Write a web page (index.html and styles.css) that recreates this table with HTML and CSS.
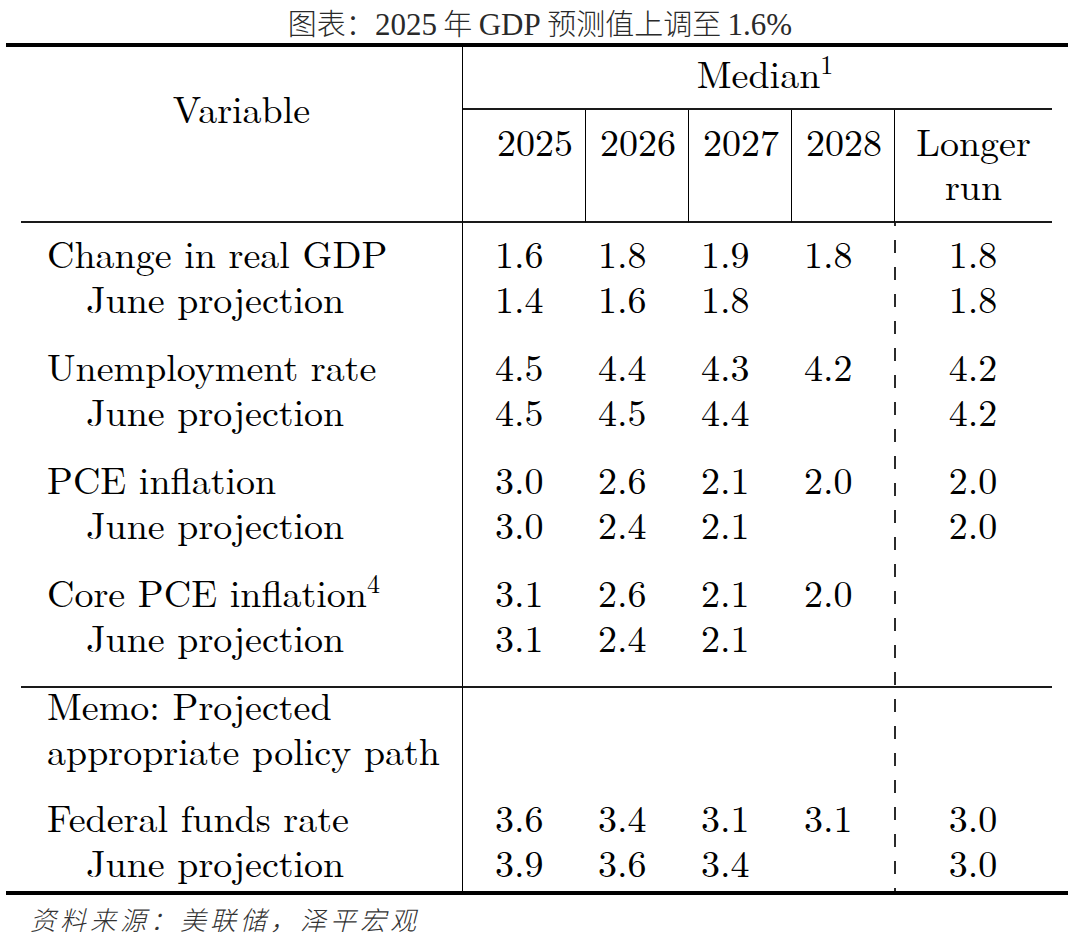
FILE: index.html
```html
<!DOCTYPE html>
<html lang="en">
<head>
<meta charset="utf-8">
<title>2025 GDP projection</title>
<link rel="stylesheet" href="styles.css">
</head>
<body>
<div class="page">
  <h1 class="title" lang="zh-CN">图表：<span class="lat">2025</span> 年 <span class="lat">GDP</span> 预测值上调至 <span class="lat">1.6%</span></h1>
  <div class="frame">
    <div class="thead">
      <div class="var">Variable</div>
      <div class="median">Median<sup>1</sup></div>
      <div class="yr first">2025</div>
      <div class="yr">2026</div>
      <div class="yr">2027</div>
      <div class="yr">2028</div>
      <div class="yr lr">Longer<br>run</div>
    </div>
    <div class="tbody">
      <div class="row first">
        <div class="lab">Change in real GDP</div>
        <div class="v c1">1.6</div><div class="v">1.8</div><div class="v">1.9</div><div class="v">1.8</div><div class="v lr">1.8</div>
      </div>
      <div class="row">
        <div class="lab sub">June projection</div>
        <div class="v c1">1.4</div><div class="v">1.6</div><div class="v">1.8</div><div class="v"></div><div class="v lr">1.8</div>
      </div>
      <div class="row gs">
        <div class="lab">Unemployment rate</div>
        <div class="v c1">4.5</div><div class="v">4.4</div><div class="v">4.3</div><div class="v">4.2</div><div class="v lr">4.2</div>
      </div>
      <div class="row">
        <div class="lab sub">June projection</div>
        <div class="v c1">4.5</div><div class="v">4.5</div><div class="v">4.4</div><div class="v"></div><div class="v lr">4.2</div>
      </div>
      <div class="row gs">
        <div class="lab">PCE inflation</div>
        <div class="v c1">3.0</div><div class="v">2.6</div><div class="v">2.1</div><div class="v">2.0</div><div class="v lr">2.0</div>
      </div>
      <div class="row">
        <div class="lab sub">June projection</div>
        <div class="v c1">3.0</div><div class="v">2.4</div><div class="v">2.1</div><div class="v"></div><div class="v lr">2.0</div>
      </div>
      <div class="row gs">
        <div class="lab">Core PCE inflation<sup>4</sup></div>
        <div class="v c1">3.1</div><div class="v">2.6</div><div class="v">2.1</div><div class="v">2.0</div><div class="v lr"></div>
      </div>
      <div class="row pre">
        <div class="lab sub">June projection</div>
        <div class="v c1">3.1</div><div class="v">2.4</div><div class="v">2.1</div><div class="v"></div><div class="v lr"></div>
      </div>
      <div class="row memo">
        <div class="lab">Memo: Projected</div>
        <div class="v c1"></div><div class="v"></div><div class="v"></div><div class="v"></div><div class="v lr"></div>
      </div>
      <div class="row memo2">
        <div class="lab">appropriate policy path</div>
        <div class="v c1"></div><div class="v"></div><div class="v"></div><div class="v"></div><div class="v lr"></div>
      </div>
      <div class="row fed">
        <div class="lab">Federal funds rate</div>
        <div class="v c1">3.6</div><div class="v">3.4</div><div class="v">3.1</div><div class="v">3.1</div><div class="v lr">3.0</div>
      </div>
      <div class="row last">
        <div class="lab sub">June projection</div>
        <div class="v c1">3.9</div><div class="v">3.6</div><div class="v">3.4</div><div class="v"></div><div class="v lr">3.0</div>
      </div>
    </div>
  </div>
  <p class="source" lang="zh-CN">资料来源：美联储，泽平宏观</p>
</div>
</body>
</html>
```

FILE: styles.css
```css
* {
  box-sizing: border-box;
  margin: 0;
  padding: 0;
}

html,
body {
  background: #ffffff;
}

body {
  width: 1080px;
  height: 940px;
  overflow: hidden;
  font-family: "Latin Modern Roman", "Liberation Serif", serif;
  color: #000000;
}

.title {
  height: 43px;
  padding-top: 1px;
  font-family: "Noto Sans CJK SC", sans-serif;
  font-weight: 300;
  font-size: 29px;
  line-height: 42px;
  text-align: center;
  color: #2a2a2a;
  white-space: nowrap;
}

.title .lat {
  font-family: "Liberation Serif", serif;
  font-weight: 400;
  font-size: 31px;
}

.frame {
  margin-left: 6px;
  width: 1062px;
  padding: 0 16px 0 15px;
  border-top: 4px solid #000000;
  border-bottom: 4px solid #000000;
}

.thead,
.tbody {
  display: grid;
  grid-template-columns: 442px 122px 103px 103px 103px 158px;
  font-family: "Latin Modern Roman", "Liberation Serif", serif;
  font-size: 38px;
  line-height: 45px;
  white-space: nowrap;
}

sup {
  font-size: 26px;
  line-height: 0;
  vertical-align: 14px;
}

.median sup {
  margin-right: -15px;
}

/* header */
.thead .var {
  grid-row: 1 / 3;
  grid-column: 1;
  padding-top: 38px;
  text-align: center;
  border-right: 1px solid #000000;
  border-bottom: 2px solid #1a1a1a;
}

.thead .median {
  grid-column: 2 / 7;
  padding: 3px 0 13px;
  text-align: center;
  border-bottom: 2px solid #1a1a1a;
}

.thead .yr {
  padding: 8px 0 13px 14px;
  border-left: 1px solid #000000;
  border-bottom: 2px solid #1a1a1a;
}

.thead .yr.first {
  padding-left: 34px;
  border-left: 0;
}

.thead .yr.lr {
  padding-left: 0;
  padding-bottom: 15px;
  line-height: 44px;
  text-align: center;
}

/* body */
.tbody {
  background-image: linear-gradient(#2b2b2b 50%, transparent 50%);
  background-size: 2px 27px;
  background-position: 873px 17px;
  background-repeat: repeat-y;
}

.row {
  display: contents;
}

.lab {
  padding-left: 26px;
  border-right: 1px solid #000000;
}

.lab.sub {
  padding-left: 65px;
}

.v {
  padding-left: 13px;
}

.v.c1 {
  padding-left: 32px;
}

.v.lr {
  padding-left: 0;
  text-align: center;
}

.row.first > * {
  padding-top: 7px;
}

.row.gs > * {
  padding-top: 23px;
}

.row.pre > * {
  padding-bottom: 27px;
}

.row.memo > * {
  line-height: 33px;
  border-top: 2px solid #1a1a1a;
}

.row.memo2 > * {
  padding-top: 6px;
}

.row.fed > * {
  padding-top: 22px;
}

.row.last > * {
  padding-bottom: 7px;
}

.source {
  padding: 4px 0 0 30px;
  font-family: "Noto Sans CJK SC", sans-serif;
  font-weight: 300;
  font-style: italic;
  font-size: 26px;
  line-height: 40px;
  letter-spacing: 4px;
  color: #333333;
}
```
